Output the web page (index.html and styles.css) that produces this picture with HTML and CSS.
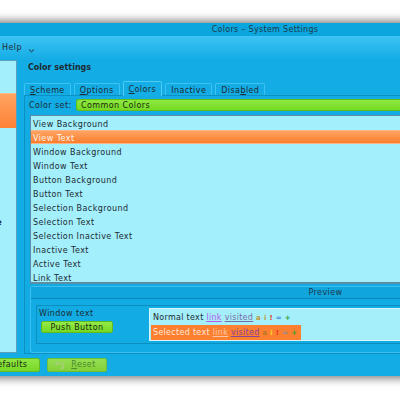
FILE: index.html
```html
<!DOCTYPE html>
<html>
<head>
<meta charset="utf-8">
<title>Colors – System Settings</title>
<link rel="stylesheet" href="styles.css">
</head>
<body>
<div class="window">
  <div class="titlebar">Colors – System Settings</div>
  <div class="body">
    <div class="menubar">
      <span class="menu">Help</span>
      <svg class="chev" width="7" height="5" viewBox="0 0 7 5"><path d="M1 1.5 L3.5 3.8 L6 1.5" fill="none" stroke="#1d2b33" stroke-width="1"/></svg>
    </div>
    <div class="main">
      <div class="sidebar">
        <div class="sb-sel"></div>
        <div class="sb-label">Appearance</div>
      </div>
      <div class="panel">
        <div class="heading">Color settings</div>
        <div class="tabs">
          <div class="tab"><u>S</u>cheme</div>
          <div class="tab"><u>O</u>ptions</div>
          <div class="tab active"><u>C</u>olors</div>
          <div class="tab">Inactive</div>
          <div class="tab">Disa<u>b</u>led</div>
        </div>
        <div class="tabpanel">
          <div class="setrow">
            <span class="setlabel">Color set:</span>
            <div class="combo">Common Colors</div>
          </div>
          <div class="list">
            <div class="item">View Background</div>
            <div class="item sel">View Text</div>
            <div class="item">Window Background</div>
            <div class="item">Window Text</div>
            <div class="item">Button Background</div>
            <div class="item">Button Text</div>
            <div class="item">Selection Background</div>
            <div class="item">Selection Text</div>
            <div class="item">Selection Inactive Text</div>
            <div class="item">Inactive Text</div>
            <div class="item">Active Text</div>
            <div class="item">Link Text</div>
            <div class="item">Visited Text</div>
          </div>
          <div class="preview">
            <div class="pv-head"><span>Preview</span></div>
            <div class="pv-body">
              <div class="wingroup">
                <div class="wincol">
                  <div class="wintext">Window text</div>
                  <div class="pushbtn">Push Button</div>
                </div>
                <div class="viewbox">
                  <div class="vrow normal">Normal text <span class="lk">link</span> <span class="vs">visited</span> <span class="c-a">a</span> <span class="c-i">i</span> <span class="c-x">!</span> <span class="c-e">=</span> <span class="c-p">+</span></div>
                  <div class="vrow selrow">Selected text <span class="lk">link</span> <span class="vs">visited</span> <span class="c-a">a</span> <span class="c-i">i</span> <span class="c-x">!</span> <span class="c-e">=</span> <span class="c-p">+</span></div>
                </div>
              </div>
            </div>
          </div>
        </div>
      </div>
    </div>
    <div class="buttons">
      <div class="btn"><u>D</u>efaults</div>
      <div class="btn disabled">
        <svg class="undo" width="11" height="8" viewBox="0 0 11 8"><path d="M3 2.5 H7 A2.5 2.5 0 0 1 7 7.5 H6" fill="none" stroke="#a6cf78" stroke-width="1.6"/><path d="M0.5 2.5 L3.5 0 V5 Z" fill="#a6cf78"/></svg>
        <span><u>R</u>eset</span>
      </div>
    </div>
  </div>
</div>
</body>
</html>
```

FILE: styles.css
```css
html, body {
  margin: 0;
  padding: 0;
}
body {
  width: 400px;
  height: 400px;
  overflow: hidden;
  background: #ffffff;
  font-family: "DejaVu Sans", sans-serif;
  font-size: 8px;
  letter-spacing: 0.42px;
  color: #1d2b33;
}
.window {
  margin: 23px 0 0 -90px;
  width: 710px;
  height: 353px;
  box-shadow: 0 0 9px 2px rgba(0, 0, 0, 0.55);
  display: flex;
  flex-direction: column;
}
.titlebar {
  height: 13px;
  line-height: 13px;
  background: #0ca6de;
  text-align: center;
  color: #1b3a4b;
  letter-spacing: 0.3px;
}
.body {
  flex: 1;
  background: linear-gradient(#3ec3f4, #13ace4 24px);
  display: flex;
  flex-direction: column;
}
.menubar {
  height: 22px;
  display: flex;
  align-items: center;
  padding-left: 92px;
  gap: 4px;
}
.menu {
  padding-top: 1px;
}
.chev {
  margin-top: 7px;
  margin-left: 2px;
}
.main {
  display: flex;
  height: 293px;
  margin-top: 2px;
}
.sidebar {
  width: 102px;
  margin-left: 4px;
  background: #a3effb;
  border: 1px solid #5ea0bb;
  border-left: none;
  display: flex;
  flex-direction: column;
}
.sb-sel {
  margin-top: 32px;
  height: 34px;
  background: linear-gradient(#ffa361, #fd8236);
  border-top: 1px solid #ffbd8c;
}
.sb-label {
  margin-top: 89px;
  display: flex;
  justify-content: flex-end;
  padding-right: 14px;
  font-weight: bold;
  white-space: nowrap;
  overflow: hidden;
  line-height: 12px;
}
.panel {
  flex: 1;
  margin-left: 7px;
  display: flex;
  flex-direction: column;
}
.heading {
  font-weight: bold;
  letter-spacing: 0;
  padding-left: 4px;
  margin-top: 1px;
  line-height: 13px;
}
.tabs {
  margin-top: 7px;
  display: flex;
  align-items: flex-end;
  height: 14px;
  gap: 3px;
}
.tab {
  height: 11px;
  line-height: 13px;
  padding: 0 5px;
  border: 1px solid #3cc2f3;
  border-bottom: none;
  border-radius: 2px 2px 0 0;
  background: #13ace4;
}
.tab.active {
  height: 14px;
  line-height: 16px;
  margin-bottom: -1px;
  position: relative;
  border-color: #4fcbf6;
  background: #14ade5;
}
.tabpanel {
  flex: 1;
  border: 1px solid #0b90c4;
  border-right: none;
  background: #12abe3;
  padding: 3px 0 0 5px;
  display: flex;
  flex-direction: column;
}
.setrow {
  display: flex;
  align-items: center;
  height: 12px;
}
.setlabel {
  margin-left: -1px;
  width: 47px;
}
.combo {
  flex: 1;
  height: 12px;
  line-height: 12px;
  padding-left: 4px;
  background: linear-gradient(#8ee840, #76da22);
  border: 1px solid #5fbf1a;
  border-right: none;
  border-radius: 3px 0 0 3px;
  box-sizing: border-box;
  color: #1a2a10;
}
.list {
  margin-top: 4px;
  height: 166px;
  overflow: hidden;
  background: #a3effb;
  border: 1px solid #5b8ea4;
  border-right: none;
  border-bottom-width: 2px;
}
.item {
  height: 12px;
  padding-top: 2px;
  line-height: 14px;
  padding-left: 2px;
  white-space: nowrap;
}
.item.sel {
  background: linear-gradient(#ffa361, #fc7e2e);
  border-top: 1px solid #fbb488;
  border-bottom: 1px solid #fbb488;
  height: 11px;
  padding-top: 1px;
  line-height: 14px;
  color: #fff4ea;
}
.preview {
  margin-top: 2px;
  height: 65px;
  border: 1px solid #3bbff0;
  border-right: none;
  border-radius: 3px 0 0 3px;
  display: flex;
  flex-direction: column;
}
.pv-head {
  height: 11px;
  line-height: 12px;
  display: flex;
  justify-content: center;
  background: #10a5dd;
  border-bottom: 1px solid #0b88ba;
  color: #1b3a4b;
}
.pv-body {
  flex: 1;
  padding: 6px 0 8px 5px;
  display: flex;
}
.wingroup {
  flex: 1;
  border: 1px solid #0b8fc1;
  border-right: none;
  display: flex;
  padding: 2px 0 2px 2px;
}
.wincol {
  width: 110px;
  display: flex;
  flex-direction: column;
}
.wintext {
  line-height: 12px;
}
.pushbtn {
  margin-top: 1px;
  margin-left: 2px;
  width: 70px;
  height: 10px;
  line-height: 11px;
  text-align: center;
  background: linear-gradient(#93ea48, #77d924);
  border: 1px solid #60bb1e;
  border-radius: 2px;
  color: #1a2a10;
}
.viewbox {
  flex: 1;
  background: #a5effb;
  border: 1px solid #d8f6fd;
  border-right: none;
  padding: 1px 0 0 1px;
}
.vrow {
  height: 15px;
  line-height: 15px;
  padding-left: 2px;
  white-space: nowrap;
  letter-spacing: 0.3px;
}
.normal {
  color: #1d2b33;
}
.selrow {
  width: 148px;
  background: #fd7f30;
  color: #ffe9da;
}
.lk, .vs {
  text-decoration: underline;
}
.normal .lk { color: #b65ce8; }
.normal .vs { color: #7a6ca4; }
.selrow .lk { color: #f9c7a6; }
.selrow .vs { color: #86459a; }
.c-a, .c-i, .c-x, .c-e, .c-p {
  font-size: 7px;
  font-weight: bold;
}
.normal .c-a { color: #c4963e; }
.normal .c-i { color: #b9a050; }
.normal .c-x { color: #e23a24; }
.normal .c-e { color: #4a8ad8; }
.normal .c-p { color: #2f9f32; }
.selrow .c-a { color: #b7772a; }
.selrow .c-i { color: #f6d22a; }
.selrow .c-x { color: #e3321e; }
.selrow .c-e { color: #8a8aa2; }
.selrow .c-p { color: #2f9f32; }
.buttons {
  display: flex;
  gap: 7px;
  padding-left: 68px;
  margin-top: 5px;
}
.btn {
  width: 60px;
  height: 12px;
  line-height: 12px;
  text-align: center;
  background: linear-gradient(#8fe646, #78d826);
  border: 1px solid #62bc20;
  border-radius: 2px;
  color: #1a2a10;
}
.btn.disabled {
  width: 58px;
  background: linear-gradient(#96de54, #82d038);
  border-color: #6cc032;
  color: #4e8a2c;
  display: flex;
  align-items: center;
  justify-content: center;
  gap: 6px;
}
.undo {
  margin-left: -4px;
}
```
